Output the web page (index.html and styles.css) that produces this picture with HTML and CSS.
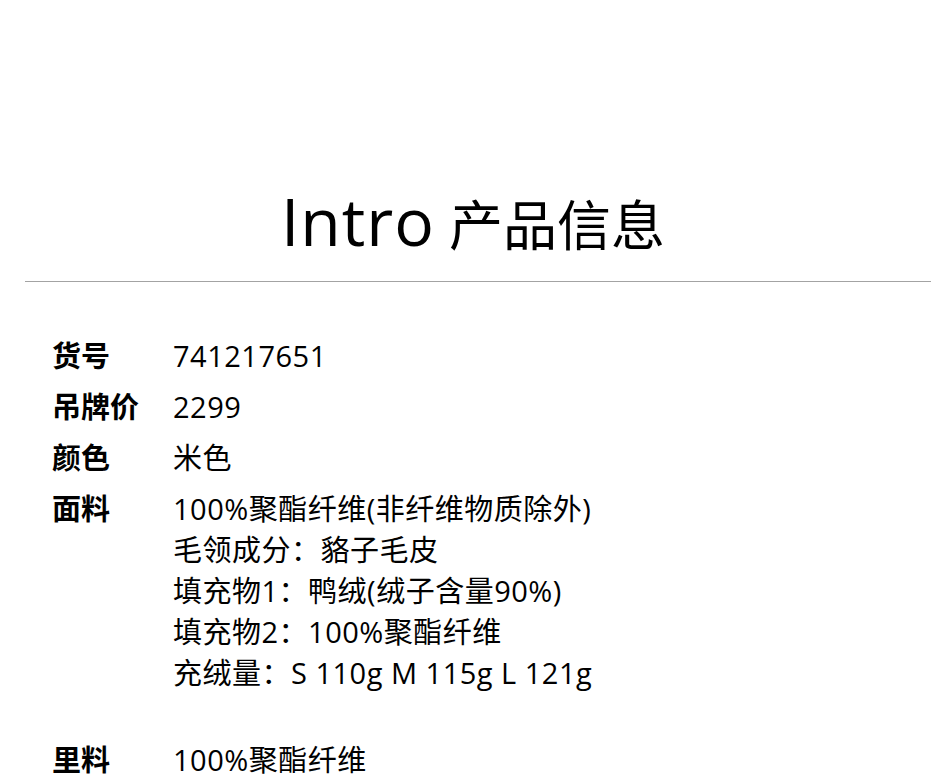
FILE: index.html
```html
<!DOCTYPE html>
<html lang="zh-CN">
<head>
  <meta charset="UTF-8" />
  <meta name="viewport" content="width=device-width, initial-scale=1" />
  <title>Intro 产品信息</title>
  <link rel="stylesheet" href="styles.css">
</head>
<body>

  <header class="intro-head">
    <h1><span class="intro-en">Intro</span> 产品信息</h1>
  </header>

  <section class="spec-list">
    <div class="spec-row">
      <div class="spec-label">货号</div>
      <div class="spec-value">741217651</div>
    </div>
    <div class="spec-row">
      <div class="spec-label">吊牌价</div>
      <div class="spec-value">2299</div>
    </div>
    <div class="spec-row">
      <div class="spec-label">颜色</div>
      <div class="spec-value">米色</div>
    </div>
    <div class="spec-row spec-row-wide">
      <div class="spec-label">面料</div>
      <div class="spec-value">
        100%聚酯纤维(非纤维物质除外)<br>
        毛领成分：貉子毛皮<br>
        填充物1：鸭绒(绒子含量90%)<br>
        填充物2：100%聚酯纤维<br>
        充绒量：S 110g M 115g L 121g
      </div>
    </div>
    <div class="spec-row">
      <div class="spec-label">里料</div>
      <div class="spec-value">100%聚酯纤维</div>
    </div>
  </section>

</body>
</html>
```

FILE: styles.css
```css
body {
  margin: 0;
  font-family: "Open Sans", "Noto Sans CJK SC", sans-serif;
  background-color: #fff;
  color: #000;
}

.intro-head {
  margin: 0 19px 0 25px;
  padding-top: 180px;
  padding-bottom: 16px;
  border-bottom: 1px solid #a3a3a3;
  text-align: center;
}

.intro-head h1 {
  margin: 0;
  padding-right: 10px;
  font-size: 54px;
  font-weight: 400;
  line-height: 80px;
}

.intro-en {
  font-size: 66px;
  letter-spacing: 1px;
}

.spec-list {
  padding: 53px 52px 0;
}

.spec-row {
  display: flex;
  margin-bottom: 10px;
  font-size: 29px;
  line-height: 41px;
}

.spec-row-wide {
  margin-bottom: 46px;
}

.spec-label {
  width: 121px;
  flex-shrink: 0;
  font-weight: 700;
}

.spec-value {
  font-weight: 400;
  letter-spacing: 0.5px;
}
```
